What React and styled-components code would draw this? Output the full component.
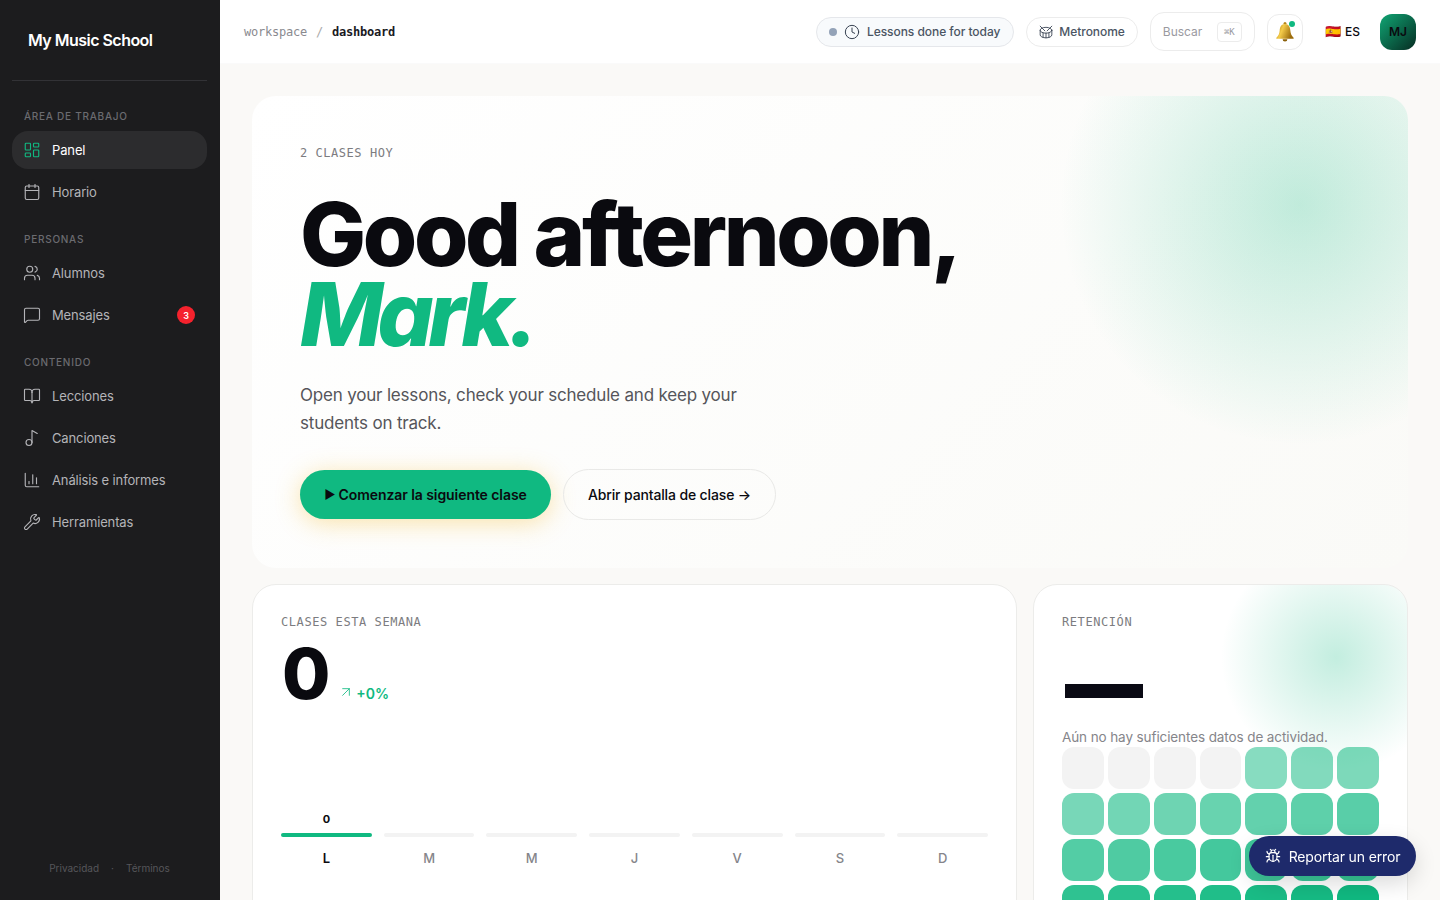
import React from "react";
import styled, { createGlobalStyle } from "styled-components";
import {
  LayoutDashboard, Calendar, Users, MessageSquare, BookOpen, Music2,
  ChartColumn, Wrench, Clock, Bug, ArrowUpRight, Drum,
} from "lucide-react";

const Global = createGlobalStyle`
  html, body { margin: 0; padding: 0; height: 100%; overflow: hidden; }
  body { font-family: Inter, "Noto Sans", sans-serif; background: #faf9f7; color: #0a0a0f; }
  * { box-sizing: border-box; }
`;

const mono = `"DejaVu Sans Mono", "Liberation Mono", monospace`;

const Shell = styled.div`display: flex; height: 100vh; overflow: hidden;`;

const Side = styled.aside`
  width: 220px; flex: none; background: #1c1c1e; display: flex; flex-direction: column;
  padding: 0 13px 0 12px;
`;
const Logo = styled.div`
  height: 81px; display: flex; align-items: center; padding-left: 16px;
  font-size: 16px; font-weight: 600; letter-spacing: -0.033em; color: #fff;
  border-bottom: 1px solid #323236;
`;
const Nav = styled.nav`flex: 1; display: flex; flex-direction: column; padding-top: 28px;`;
const Group = styled.div`display: flex; flex-direction: column; gap: 4px; margin-bottom: 21px;`;
const GroupLabel = styled.div`
  font-size: 10px; line-height: 14px; font-weight: 500; letter-spacing: 0.075em; color: #6b6b70;
  padding-left: 12px; margin-bottom: 4px;
`;
const Item = styled.div`
  height: 38px; border-radius: 16px; display: flex; align-items: center; gap: 11px; padding: 0 12px 0 11px;
  font-size: 13px; letter-spacing: -0.01em; color: ${p => (p.$active ? "#fff" : "#b4b4b8")};
  background: ${p => (p.$active ? "#2c2c2e" : "transparent")};
  svg { color: ${p => (p.$active ? "#10b981" : "#b4b4b8")}; flex: none; }
`;
const Badge = styled.span`
  margin-left: auto; width: 18px; height: 18px; border-radius: 50%; background: #f5222d; color: #fff;
  font-size: 9px; font-weight: 600; display: flex; align-items: center; justify-content: center;
`;
const SideFoot = styled.div`
  height: 64px; display: flex; justify-content: center; gap: 12px; padding-top: 25px;
  font-size: 10px; line-height: 14px; color: #56565a;
`;

const Main = styled.div`flex: 1; min-width: 0; display: flex; flex-direction: column;`;
const Header = styled.header`
  height: 64px; flex: none; background: #fff; display: flex; align-items: center; padding: 0 24px;
  border-bottom: 1px solid #fafafa;
`;
const Crumbs = styled.div`
  font-family: ${mono}; font-size: 12px; letter-spacing: -0.22px; display: flex; gap: 9px; color: #8a8a8f; margin-right: auto;
  b { color: #1a1a1f; font-weight: 700; }
  i { font-style: normal; color: #aaa; }
`;
const Tools = styled.div`display: flex; align-items: center;`;
const Pill = styled.div`
  height: 30px; border-radius: 15px; display: flex; align-items: center; font-size: 12px; font-weight: 500;
  letter-spacing: -0.05px; color: #4b5563; border: 1px solid ${p => (p.$status ? "#e5e7eb" : "#ececec")};
  background: ${p => (p.$status ? "#f8fafc" : "#fff")}; padding: 0 ${p => (p.$status ? 13 : 12)}px 0 12px;
  margin-right: 12px; white-space: nowrap;
  svg { flex: none; margin-right: ${p => (p.$status ? 7 : 6)}px; color: #374151; }
`;
const Dot = styled.span`width: 8px; height: 8px; border-radius: 50%; background: #94a3b8; margin-right: 7px;`;
const Emoji = styled.span`font-family: "Noto Color Emoji", "Apple Color Emoji", sans-serif; font-size: 13px; line-height: 1;`;
const Search = styled.div`
  width: 105px; height: 39px; border-radius: 14px; border: 1px solid #ececec; background: #fff;
  display: flex; align-items: center; justify-content: space-between; padding: 0 12px;
  font-size: 12px; color: #9a9a9f; margin-right: 12px;
`;
const Kbd = styled.span`
  width: 25px; height: 20px; border: 1px solid #ececec; border-radius: 4px; font-family: ${mono};
  font-size: 9px; color: #9a9a9f; display: flex; align-items: center; justify-content: center;
`;
const Bell = styled.div`
  position: relative; width: 36px; height: 36px; border: 1px solid #ececec; border-radius: 12px; background: #fff;
  display: flex; align-items: center; justify-content: center; margin-right: 23px;
`;
const BellDot = styled.span`
  position: absolute; top: 6px; right: 7px; width: 6px; height: 6px; border-radius: 50%; background: #10b981;
`;
const Lang = styled.div`display: flex; align-items: center; gap: 3px; font-size: 12px; font-weight: 500; margin-right: 20px;`;
const Avatar = styled.div`
  width: 36px; height: 36px; border-radius: 12px; background: linear-gradient(135deg, #10a674, #062c22);
  color: #0a0a0f; font-size: 12px; font-weight: 600; display: flex; align-items: center; justify-content: center;
`;

const Content = styled.main`flex: 1; padding: 32px; display: flex; flex-direction: column; gap: 16px; overflow: hidden;`;
const Hero = styled.section`
  position: relative; flex: none; height: 472px; border-radius: 24px; padding: 48px; overflow: hidden;
  background: linear-gradient(135deg, #ffffff 0%, #fafaf7 100%);
`;
const HeroGlow = styled.div`
  position: absolute; left: 808px; top: -131px; width: 480px; height: 480px; pointer-events: none;
  background: radial-gradient(closest-side, rgba(16,185,129,.25), rgba(16,185,129,0) 100%);
`;
const Eyebrow = styled.div`
  font-family: ${mono}; font-size: 12px; line-height: 18px; letter-spacing: 0.045em; color: #7c7c80;
`;
const Title = styled.h1`
  margin: 32px 0 0; font-size: 88px; line-height: 80px; font-weight: 800; letter-spacing: -0.0385em; color: #0a0a0f;
  em { display: block; color: #10b981; font-style: italic; letter-spacing: -0.062em; }
`;
const Lead = styled.p`margin: 27px 0 0; width: 460px; font-size: 17px; line-height: 28px; color: #55555a; letter-spacing: -0.011em;`;
const Actions = styled.div`display: flex; align-items: center; gap: 12px; margin-top: 32px;`;
const Primary = styled.div`
  height: 49px; width: 251px; border-radius: 25px; background: #10b981; color: #0a0a0f; font-size: 14px; font-weight: 600;
  letter-spacing: -0.005em; display: flex; align-items: center; justify-content: center; gap: 3px;
  box-shadow: 0 4px 24px rgba(245,190,60,.42);
`;
const Play = styled.span`font-size: 12px;`;
const Secondary = styled.div`
  height: 51px; width: 213px; border-radius: 26px; border: 1px solid #e9e9e7; color: #0a0a0f; font-size: 14px; font-weight: 500;
  letter-spacing: -0.01em; display: flex; align-items: center; justify-content: center;
`;

const Row = styled.div`display: grid; grid-template-columns: 1fr 375px; gap: 16px;`;
const Card = styled.section`
  position: relative; height: 420px; background: #fff; border: 1px solid #ececea; border-radius: 24px; padding: 28px; overflow: hidden;
`;
const CardLabel = styled.div`font-family: ${mono}; font-size: 12px; line-height: 18px; letter-spacing: 0.048em; color: #7c7c80;`;
const Big = styled.div`display: flex; align-items: flex-end; gap: 10px; margin-top: 3px;`;
const Num = styled.div`font-size: 70px; line-height: 80px; font-weight: 800; color: #0a0a0f; letter-spacing: -0.03em; padding-left: 1px;`;
const Delta = styled.div`
  display: flex; align-items: center; gap: 2px; font-size: 14px; font-weight: 600; color: #10b981; margin-bottom: 12px;
  svg { margin-bottom: 2px; }
`;
const Bars = styled.div`display: grid; grid-template-columns: repeat(7, 1fr); gap: 12px; margin-top: 96px;`;
const Day = styled.div`display: flex; flex-direction: column; align-items: center;`;
const DayVal = styled.div`height: 18px; line-height: 18px; font-size: 11px; font-weight: 700; color: #0a0a0f;`;
const Track = styled.div`
  width: 100%; height: 4px; border-radius: 2px; margin-top: 5px; background: ${p => (p.$on ? "#10b981" : "#f3f3f3")};
`;
const DayName = styled.div`margin-top: 12px; font-size: 13px; line-height: 18px; font-weight: ${p => (p.$on ? 600 : 500)}; color: ${p => (p.$on ? "#0a0a0f" : "#85858a")};`;

const CardGlow = styled.div`
  position: absolute; left: 187px; top: -43px; width: 230px; height: 230px; pointer-events: none;
  background: radial-gradient(closest-side, rgba(16,185,129,.25), rgba(16,185,129,0) 100%);
`;
const Dash = styled.div`width: 78px; height: 14px; background: #0a0a14; margin: 53px 0 0 3px;`;
const Note = styled.p`margin: 29px 0 0; font-size: 13.5px; line-height: 20px; letter-spacing: -0.1px; color: #85858a; position: relative;`;
const Heat = styled.div`display: grid; grid-template-columns: repeat(7, 1fr); gap: 4px; position: relative;`;
const Cell = styled.div`
  aspect-ratio: 1; border-radius: 12px; background: ${p => (p.$empty ? "#f3f3f3" : "#10b981")};
`;
const Report = styled.div`
  position: fixed; right: 24px; bottom: 24px; height: 40px; width: 167px; border-radius: 20px; background: #1e2a6b; color: #fff;
  display: flex; align-items: center; justify-content: center; gap: 8px; font-size: 14px; letter-spacing: -0.01em;
  box-shadow: 0 8px 22px rgba(0,0,0,.14);
`;

const icon = { size: 18, strokeWidth: 1.5 };
const days = ["L", "M", "M", "J", "V", "S", "D"];

const BellIcon = () => (
  <svg width="22" height="22" viewBox="0 0 22 22">
    <defs>
      <linearGradient id="bellGold" x1="0" y1="0" x2="1" y2="0.35">
        <stop offset="0" stopColor="#a97810" />
        <stop offset="0.42" stopColor="#f4cb4a" />
        <stop offset="1" stopColor="#9c6c0c" />
      </linearGradient>
    </defs>
    <circle cx="11" cy="2.6" r="1.5" fill="#b5851a" />
    <path d="M11 3C7.4 3 6 5.8 5.7 9.2 5.4 12.6 4.6 14.6 2.6 16.4c-.6.6-.3 1.3.5 1.3h15.8c.8 0 1.1-.7.5-1.3-2-1.8-2.8-3.8-3.1-7.2C16 5.8 14.6 3 11 3Z" fill="url(#bellGold)" />
    <path d="M8.6 18.2h4.8a2.4 2.4 0 0 1-4.8 0Z" fill="#8a5f0a" />
  </svg>
);

export default function App() {
  return (
    <Shell>
      <Global />
      <Side>
        <Logo>My Music School</Logo>
        <Nav>
          <Group>
            <GroupLabel>ÁREA DE TRABAJO</GroupLabel>
            <Item $active><LayoutDashboard {...icon} />Panel</Item>
            <Item><Calendar {...icon} />Horario</Item>
          </Group>
          <Group>
            <GroupLabel>PERSONAS</GroupLabel>
            <Item><Users {...icon} />Alumnos</Item>
            <Item><MessageSquare {...icon} />Mensajes<Badge>3</Badge></Item>
          </Group>
          <Group>
            <GroupLabel>CONTENIDO</GroupLabel>
            <Item><BookOpen {...icon} />Lecciones</Item>
            <Item><Music2 {...icon} />Canciones</Item>
            <Item><ChartColumn {...icon} />Análisis e informes</Item>
            <Item><Wrench {...icon} />Herramientas</Item>
          </Group>
        </Nav>
        <SideFoot><span>Privacidad</span><span>·</span><span>Términos</span></SideFoot>
      </Side>
      <Main>
        <Header>
          <Crumbs><span>workspace</span><i>/</i><b>dashboard</b></Crumbs>
          <Tools>
            <Pill $status><Dot /><Clock size={16} strokeWidth={1.5} />Lessons done for today</Pill>
            <Pill><Drum size={14} strokeWidth={1.5} />Metronome</Pill>
            <Search>Buscar<Kbd>⌘K</Kbd></Search>
            <Bell><BellIcon /><BellDot /></Bell>
            <Lang><Emoji>🇪🇸</Emoji>ES</Lang>
            <Avatar>MJ</Avatar>
          </Tools>
        </Header>
        <Content>
          <Hero>
            <HeroGlow />
            <Eyebrow>2 CLASES HOY</Eyebrow>
            <Title>Good afternoon,<em>Mark.</em></Title>
            <Lead>Open your lessons, check your schedule and keep your students on track.</Lead>
            <Actions>
              <Primary><Play>►</Play>Comenzar la siguiente clase</Primary>
              <Secondary>Abrir pantalla de clase →</Secondary>
            </Actions>
          </Hero>
          <Row>
            <Card>
              <CardLabel>CLASES ESTA SEMANA</CardLabel>
              <Big>
                <Num>0</Num>
                <Delta><ArrowUpRight size={16} strokeWidth={1.25} />+0%</Delta>
              </Big>
              <Bars>
                {days.map((d, i) => (
                  <Day key={i}>
                    <DayVal>{i === 0 ? "0" : ""}</DayVal>
                    <Track $on={i === 0} />
                    <DayName $on={i === 0}>{d}</DayName>
                  </Day>
                ))}
              </Bars>
            </Card>
            <Card>
              <CardGlow />
              <CardLabel>RETENCIÓN</CardLabel>
              <Dash />
              <Note>Aún no hay suficientes datos de actividad.</Note>
              <Heat>
                {Array.from({ length: 35 }, (_, i) => (
                  <Cell key={i} $empty={i < 4} style={i < 4 ? undefined : { opacity: Math.min(1, 0.5 + (i - 4) * 0.0217) }} />
                ))}
              </Heat>
            </Card>
          </Row>
        </Content>
      </Main>
      <Report><Bug size={16} strokeWidth={1.75} />Reportar un error</Report>
    </Shell>
  );
}
